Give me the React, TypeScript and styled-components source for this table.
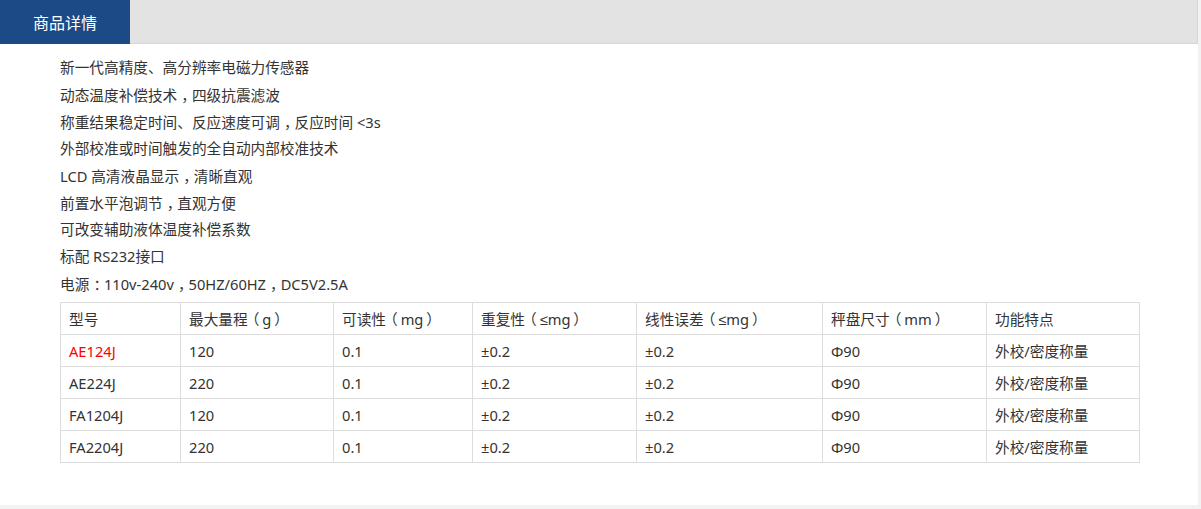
import React from "react";
import styled, { createGlobalStyle, css } from "styled-components";

const Global = createGlobalStyle`
  html, body { margin: 0; padding: 0; background: #f2f2f2; }
  body { font-family: "Noto Sans", "Noto Sans CJK SC", sans-serif; color: #333; }
`;

const Panel = styled.div`
  width: 1198px;
  height: 505px;
  background: #fff;
  box-sizing: border-box;
`;

const TabBar = styled.div`
  display: flex;
  height: 44px;
  background: #e3e3e3;
  border-bottom: 1px solid #d6d6d6;
  border-right: 1px solid #d6d6d6;
  box-sizing: border-box;
`;

const Tab = styled.div`
  width: 130px;
  height: 44px;
  background: #1b4a87;
  color: #fff;
  font-size: 16px;
  font-family: "Noto Sans CJK SC", sans-serif;
  display: flex;
  align-items: center;
  justify-content: center;
`;

const Body = styled.div`
  padding: 10px 0 0 60px;
`;

const Line = styled.div`
  font-size: 14.67px;
  line-height: 27px;
  height: 27px;
  color: #333;
  white-space: nowrap;
`;

const Punct = styled.span<{ $kind: "mid" | "open" | "close" }>`
  font-family: "Noto Sans CJK SC", sans-serif;
  font-feature-settings: "halt" 1;
  ${(p) =>
    p.$kind === "mid" &&
    css`
      padding: 0 0.22em 0 0.28em;
    `}
  ${(p) =>
    p.$kind === "open" &&
    css`
      padding: 0 0.2em 0 0.3em;
    `}
  ${(p) =>
    p.$kind === "close" &&
    css`
      padding: 0 0.3em 0 0.2em;
    `}
`;

const Sym = styled.span`
  font-family: "Liberation Sans", sans-serif;
`;

const Table = styled.table`
  margin-top: 5px;
  border-collapse: collapse;
  width: 1079px;
  table-layout: fixed;
  font-size: 14.67px;
`;

const Cell = styled.td<{ $red?: boolean }>`
  border: 1px solid #dddddd;
  height: 32px;
  padding: 0 0 0 8px;
  color: ${(p) => (p.$red ? "#ff0000" : "#333")};
  white-space: nowrap;
  box-sizing: border-box;
`;

function T({ s }: { s: string }) {
  const parts = s.split(/([，：（）≤])/);
  return (
    <>
      {parts.map((p, i) => {
        if (p === "，" || p === "：") return <Punct key={i} $kind="mid">{p}</Punct>;
        if (p === "（") return <Punct key={i} $kind="open">{p}</Punct>;
        if (p === "）") return <Punct key={i} $kind="close">{p}</Punct>;
        if (p === "≤") return <Sym key={i}>{p}</Sym>;
        return <React.Fragment key={i}>{p}</React.Fragment>;
      })}
    </>
  );
}

const widths = [120, 153, 139, 164, 186, 164, 153];
const head = ["型号", "最大量程（g）", "可读性（mg）", "重复性（≤mg）", "线性误差（≤mg）", "秤盘尺寸（mm）", "功能特点"];
const rows = [
  ["AE124J", "120", "0.1", "±0.2", "±0.2", "Φ90", "外校/密度称量"],
  ["AE224J", "220", "0.1", "±0.2", "±0.2", "Φ90", "外校/密度称量"],
  ["FA1204J", "120", "0.1", "±0.2", "±0.2", "Φ90", "外校/密度称量"],
  ["FA2204J", "220", "0.1", "±0.2", "±0.2", "Φ90", "外校/密度称量"],
];

const lines = [
  "新一代高精度、高分辨率电磁力传感器",
  "动态温度补偿技术，四级抗震滤波",
  "称重结果稳定时间、反应速度可调，反应时间 <3s",
  "外部校准或时间触发的全自动内部校准技术",
  "LCD 高清液晶显示，清晰直观",
  "前置水平泡调节，直观方便",
  "可改变辅助液体温度补偿系数",
  "标配 RS232接口",
  "电源：110v-240v，50HZ/60HZ，DC5V2.5A",
];

export default function App() {
  return (
    <>
      <Global />
      <Panel>
        <TabBar>
          <Tab>商品详情</Tab>
        </TabBar>
        <Body>
          {lines.map((l) => (
            <Line key={l}>
              <T s={l} />
            </Line>
          ))}
          <Table>
            <colgroup>
              {widths.map((w, i) => (
                <col key={i} style={{ width: w }} />
              ))}
            </colgroup>
            <tbody>
              <tr>
                {head.map((h) => (
                  <Cell key={h}>
                    <T s={h} />
                  </Cell>
                ))}
              </tr>
              {rows.map((r, ri) => (
                <tr key={ri}>
                  {r.map((c, ci) => (
                    <Cell key={ci} $red={ri === 0 && ci === 0}>
                      {c}
                    </Cell>
                  ))}
                </tr>
              ))}
            </tbody>
          </Table>
        </Body>
      </Panel>
    </>
  );
}
